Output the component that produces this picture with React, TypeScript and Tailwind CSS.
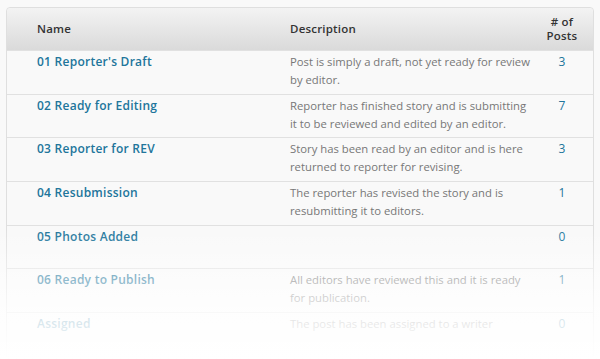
import React from "react";

type Status = { name: string; description: string; count: number };

const statuses: Status[] = [
  { name: "01 Reporter's Draft", description: "Post is simply a draft, not yet ready for review by editor.", count: 3 },
  { name: "02 Ready for Editing", description: "Reporter has finished story and is submitting it to be reviewed and edited by an editor.", count: 7 },
  { name: "03 Reporter for REV", description: "Story has been read by an editor and is here returned to reporter for revising.", count: 3 },
  { name: "04 Resubmission", description: "The reporter has revised the story and is resubmitting it to editors.", count: 1 },
  { name: "05 Photos Added", description: "", count: 0 },
  { name: "06 Ready to Publish", description: "All editors have reviewed this and it is ready for publication.", count: 1 },
  { name: "Assigned", description: "The post has been assigned to a writer", count: 0 },
];

const font = { fontFamily: '"Open Sans", "DejaVu Sans", sans-serif' };

export default function App() {
  return (
    <div className="relative w-[600px] h-[359px] overflow-hidden bg-[#f9f9f9] pt-[7px] px-[6px]" style={font}>
      <div className="rounded-t-[4px] border border-[#dfdfdf] bg-[#f9f9f9]">
        <div className="grid grid-cols-[283px_241px_1fr] h-[42px] items-center rounded-t-[4px] bg-gradient-to-b from-[#f3f3f3] to-[#dadada] text-[11.5px] font-semibold tracking-[0.2px] text-[#333]">
          <div className="pl-[30px]">Name</div>
          <div>Description</div>
          <div className="flex flex-col items-center text-[11.5px] leading-[14px]">
            <span># of</span>
            <span>Posts</span>
          </div>
        </div>
        {statuses.map((s) => (
          <div
            key={s.name}
            className="grid grid-cols-[283px_241px_1fr] h-[43.67px] border-t border-[#e1e1e1] pt-[2px] leading-[18px]"
          >
            <div className="pl-[30px] text-[12px] font-semibold tracking-[0.25px] text-[#21759b]">{s.name}</div>
            <div className="text-[11.3px] text-[#777]">{s.description}</div>
            <div className="text-center text-[12px] text-[#21759b]">{s.count}</div>
          </div>
        ))}
      </div>
      <div className="pointer-events-none absolute left-0 right-0 top-[228px] h-[131px] bg-gradient-to-b from-[rgba(255,255,255,0)] via-[rgba(255,255,255,0.75)] via-60% to-white" />
    </div>
  );
}
